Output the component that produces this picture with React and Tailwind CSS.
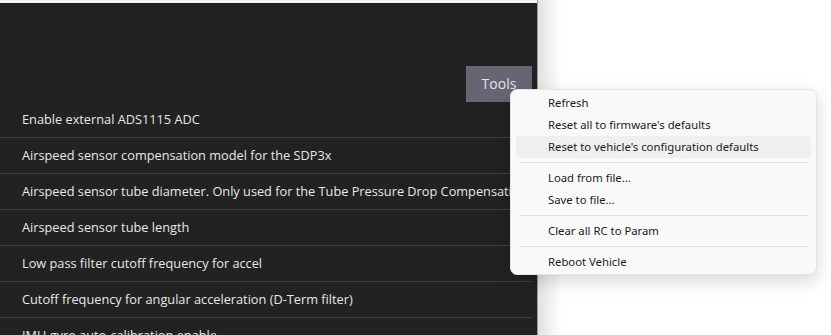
import React from 'react';

const params = [
    "Enable external ADS1115 ADC",
    "Airspeed sensor compensation model for the SDP3x",
    "Airspeed sensor tube diameter. Only used for the Tube Pressure Drop Compensation",
    "Airspeed sensor tube length",
    "Low pass filter cutoff frequency for accel",
    "Cutoff frequency for angular acceleration (D-Term filter)",
    "IMU gyro auto-calibration enable",
];

const menu = [
    { label: "Refresh" },
    { label: "Reset all to firmware's defaults" },
    { label: "Reset to vehicle's configuration defaults", active: true },
    { sep: true },
    { label: "Load from file..." },
    { label: "Save to file..." },
    { sep: true },
    { label: "Clear all RC to Param" },
    { sep: true },
    { label: "Reboot Vehicle" },
];

function ToolsMenu() {
    return (
        <div className="absolute left-[510px] top-[89px] w-[307px] pt-[2px] pb-[1px] rounded-[7px] border border-[#e4e4e4] bg-[#f9f9f9] shadow-[0_6px_18px_rgba(0,0,0,0.16)] font-['Noto_Sans',sans-serif] text-[11.3px] text-[#1b1b1b]">
            {menu.map((item, i) =>
                item.sep ? (
                    <div key={i} className="py-[4px] pl-[8px] pr-[7px]">
                        <div className="h-px bg-[#e1e1e1]" />
                    </div>
                ) : (
                    <div
                        key={i}
                        className={`mx-[5px] h-[22px] flex items-center pl-[32px] rounded-[4px] ${item.active ? "bg-[#efefef]" : ""}`}
                    >
                        {item.label}
                    </div>
                )
            )}
        </div>
    );
}

export default function App() {
    return (
        <div className="relative w-[831px] h-[335px] overflow-hidden flex bg-white">
            <div className="w-[538px] shrink-0 flex flex-col bg-[#222222] border-r border-[#9a9a9a]">
                <div className="h-[3px] bg-[#f6f2f0]" />
                <div className="h-[99px] flex items-start justify-end pt-[63px] pr-[5px]">
                    <button className="w-[66px] h-[36px] bg-[#676574] text-[#e4e4e8] text-[14px] font-['Open_Sans',sans-serif]">
                        Tools
                    </button>
                </div>
                <div className="w-[532px] overflow-hidden font-['Open_Sans',sans-serif] text-[12.75px] text-[#e8e8e8]">
                    {params.map((p) => (
                        <div key={p} className="h-[36px] flex items-center pl-[22px] pt-[1px] border-b border-[#3f3f3f] whitespace-nowrap">
                            {p}
                        </div>
                    ))}
                </div>
            </div>
            <div className="flex-1 flex">
                <div className="w-[24px] bg-linear-to-r from-[#e2e2e2] to-white" />
            </div>
            <ToolsMenu />
        </div>
    );
}
